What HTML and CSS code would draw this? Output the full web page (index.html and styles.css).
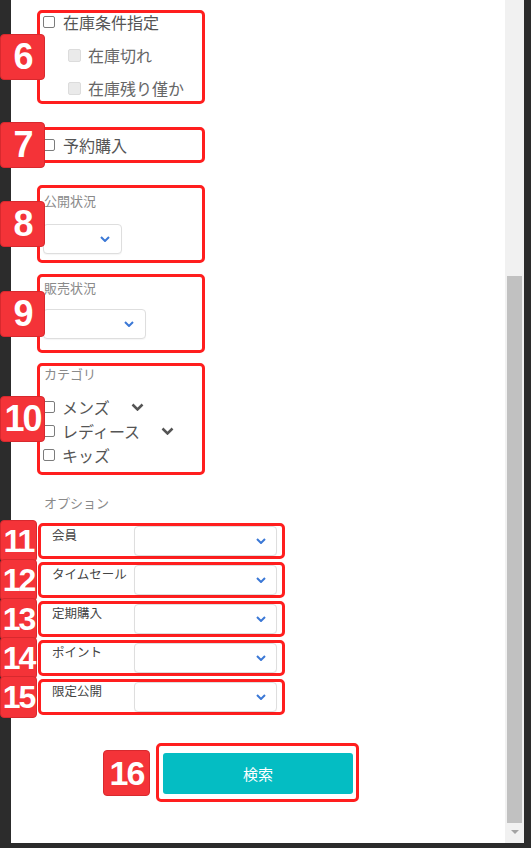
FILE: index.html
```html
<!DOCTYPE html>
<html lang="ja">
<head>
  <meta charset="UTF-8">
  <title>検索条件</title>
  <link rel="stylesheet" href="styles.css">
</head>
<body>
  <div class="screen">
    <div class="edge-left"></div>

    <div class="panel">
      <div class="mark box-stock">
        <span class="badge badge-lg">6</span>
        <label class="check-row"><input type="checkbox" class="check">在庫条件指定</label>
        <label class="check-row sub"><input type="checkbox" class="check" disabled>在庫切れ</label>
        <label class="check-row sub"><input type="checkbox" class="check" disabled>在庫残り僅か</label>
      </div>

      <div class="mark box-reserve">
        <span class="badge badge-lg">7</span>
        <label class="check-row"><input type="checkbox" class="check">予約購入</label>
      </div>

      <div class="mark box-field box-public">
        <span class="badge badge-lg">8</span>
        <div class="field-label">公開状況</div>
        <div class="select select-public">
          <svg class="chev" width="10" height="6" viewBox="0 0 10 6"><path d="M1 1l4 4 4-4"/></svg>
        </div>
      </div>

      <div class="mark box-field box-sale">
        <span class="badge badge-lg">9</span>
        <div class="field-label">販売状況</div>
        <div class="select select-sale">
          <svg class="chev" width="10" height="6" viewBox="0 0 10 6"><path d="M1 1l4 4 4-4"/></svg>
        </div>
      </div>

      <div class="mark box-category">
        <span class="badge badge-lg">10</span>
        <div class="field-label">カテゴリ</div>
        <div class="cat-list">
          <label class="cat-row"><input type="checkbox" class="check">メンズ
            <svg class="cat-chev" width="13" height="8" viewBox="0 0 13 8"><path d="M1.5 1.5l5 5 5-5"/></svg>
          </label>
          <label class="cat-row"><input type="checkbox" class="check">レディース
            <svg class="cat-chev" width="13" height="8" viewBox="0 0 13 8"><path d="M1.5 1.5l5 5 5-5"/></svg>
          </label>
          <label class="cat-row"><input type="checkbox" class="check">キッズ</label>
        </div>
      </div>

      <div class="section-title">オプション</div>

      <div class="options">
        <div class="mark option-row">
          <span class="badge badge-sm">11</span>
          <div class="option-label">会員</div>
          <div class="select select-option">
            <svg class="chev" width="10" height="6" viewBox="0 0 10 6"><path d="M1 1l4 4 4-4"/></svg>
          </div>
        </div>
        <div class="mark option-row">
          <span class="badge badge-sm">12</span>
          <div class="option-label">タイムセール</div>
          <div class="select select-option">
            <svg class="chev" width="10" height="6" viewBox="0 0 10 6"><path d="M1 1l4 4 4-4"/></svg>
          </div>
        </div>
        <div class="mark option-row">
          <span class="badge badge-sm">13</span>
          <div class="option-label">定期購入</div>
          <div class="select select-option">
            <svg class="chev" width="10" height="6" viewBox="0 0 10 6"><path d="M1 1l4 4 4-4"/></svg>
          </div>
        </div>
        <div class="mark option-row">
          <span class="badge badge-sm">14</span>
          <div class="option-label">ポイント</div>
          <div class="select select-option">
            <svg class="chev" width="10" height="6" viewBox="0 0 10 6"><path d="M1 1l4 4 4-4"/></svg>
          </div>
        </div>
        <div class="mark option-row">
          <span class="badge badge-sm">15</span>
          <div class="option-label">限定公開</div>
          <div class="select select-option">
            <svg class="chev" width="10" height="6" viewBox="0 0 10 6"><path d="M1 1l4 4 4-4"/></svg>
          </div>
        </div>
      </div>

      <div class="mark box-submit">
        <span class="badge badge-btn">16</span>
        <button class="search-btn">検索</button>
      </div>
    </div>

    <div class="scrollbar">
      <div class="scroll-thumb"></div>
      <div class="scroll-arrow"></div>
    </div>

    <div class="edge-right"></div>
  </div>
</body>
</html>
```

FILE: styles.css
```css
body {
  margin: 0;
  background: #2b2b2b;
  font-family: "Noto Sans CJK JP", "Noto Sans", sans-serif;
  color: #555;
}

.screen {
  display: flex;
  height: 843px;
}

.edge-left {
  width: 11px;
  background: #2c2c2c;
}

.edge-right {
  width: 7px;
  background: #2b2b2b;
}

.panel {
  width: 494px;
  box-sizing: border-box;
  padding: 10px 0 0 26px;
  background: #fff;
}

.scrollbar {
  width: 19px;
  background: #f1f1f1;
  display: flex;
  flex-direction: column;
  align-items: center;
}

.scroll-thumb {
  margin-top: 276px;
  width: 15px;
  height: 547px;
  background: #c1c1c1;
}

.scroll-arrow {
  margin-top: 7px;
  border-left: 4px solid transparent;
  border-right: 4px solid transparent;
  border-top: 4px solid #a3a3a3;
}

/* red annotation frames */
.mark {
  position: relative;
  box-sizing: border-box;
  border: 3px solid #ff1e1e;
  border-radius: 5px;
}

.badge {
  position: absolute;
  top: 50%;
  transform: translateY(-50%);
  box-sizing: border-box;
  background: #f43338;
  border: 1px solid #d8292e;
  border-radius: 4px;
  color: #fff;
  font-family: "Liberation Sans", Arial, sans-serif;
  font-weight: bold;
  text-align: center;
}

.badge-lg {
  left: -40px;
  width: 45px;
  height: 46px;
  font-size: 36px;
  line-height: 44px;
  letter-spacing: -2px;
}

.badge-sm {
  left: -41px;
  width: 37px;
  height: 42px;
  font-size: 32px;
  line-height: 40px;
  letter-spacing: -2px;
}

.badge-btn {
  left: -56px;
  width: 47px;
  height: 46px;
  font-size: 34px;
  line-height: 44px;
  letter-spacing: -2px;
}

/* checkboxes */
.check {
  appearance: none;
  -webkit-appearance: none;
  margin: 0;
  width: 12px;
  height: 12px;
  border: 1px solid #7c7c7c;
  border-radius: 2px;
  background: #fff;
  flex: none;
}

.check:disabled {
  width: 13px;
  height: 13px;
  background: #eaeaea;
  border-color: #dcdcdc;
}

.check-row {
  display: flex;
  align-items: center;
  gap: 8px;
  height: 18px;
  font-size: 16px;
  color: #555;
}

.check-row.sub {
  margin-top: 15px;
  padding-left: 25px;
  gap: 7px;
  color: #666;
}

.box-stock {
  width: 168px;
  padding: 0 0 4px 3px;
}

.box-reserve {
  width: 168px;
  margin-top: 23px;
  padding: 6px 0 6px 3px;
}

/* label + select boxes */
.box-field {
  width: 168px;
  padding-left: 3px;
}

.box-public {
  margin-top: 22px;
  padding-top: 5px;
  padding-bottom: 6px;
}

.box-public .select {
  margin-top: 15px;
}

.box-sale {
  margin-top: 11px;
  padding-top: 3px;
  padding-bottom: 11px;
}

.box-sale .select {
  margin-top: 13px;
}

.field-label {
  padding-left: 1px;
  font-size: 13px;
  line-height: 16px;
  color: #8a8a8a;
}

.select {
  display: flex;
  align-items: center;
  justify-content: flex-end;
  box-sizing: border-box;
  height: 30px;
  padding-right: 11px;
  border: 1px solid #dedede;
  border-radius: 4px;
  background: #fff;
  box-shadow: 0 1px 1px rgba(0, 0, 0, 0.04);
}

.select-public {
  width: 79px;
}

.select-sale {
  width: 103px;
}

.chev {
  fill: none;
  stroke: #3b78d6;
  stroke-width: 2;
}

/* category */
.box-category {
  width: 168px;
  margin-top: 10px;
  padding: 0 0 5px 3px;
}

.cat-list {
  margin-top: 13px;
}

.cat-row {
  display: flex;
  align-items: center;
  gap: 7px;
  height: 24px;
  font-size: 16px;
  color: #555;
}

.cat-chev {
  margin-left: 14px;
  fill: none;
  stroke: #555;
  stroke-width: 2.5;
}

/* options */
.section-title {
  margin-top: 20px;
  padding-left: 7px;
  font-size: 13px;
  line-height: 16px;
  color: #8a8a8a;
}

.options {
  margin-top: 12px;
  margin-left: 1px;
  display: flex;
  flex-direction: column;
  gap: 3px;
}

.option-row {
  display: flex;
  width: 247px;
  height: 36px;
  padding: 0 5px 0 11px;
}

.option-label {
  flex: 1;
  padding-top: 1px;
  font-size: 12.5px;
  line-height: 16px;
  color: #444;
}

.select-option {
  width: 143px;
  padding-right: 10px;
}

/* submit */
.box-submit {
  width: 203px;
  margin: 28px 0 0 119px;
  padding: 7px 3px 5px 4px;
}

.search-btn {
  display: block;
  width: 190px;
  height: 41px;
  border: none;
  border-radius: 3px;
  background: #04bdc3;
  color: #fff;
  font-family: "Noto Sans CJK JP", "Noto Sans", sans-serif;
  font-size: 15px;
  cursor: pointer;
}
```
